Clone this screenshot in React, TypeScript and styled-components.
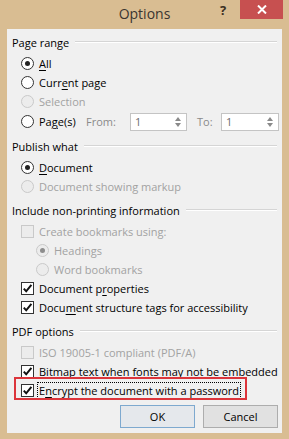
import React from "react";
import styled, { createGlobalStyle, css } from "styled-components";

const GlobalStyle = createGlobalStyle`
  html, body { margin: 0; padding: 0; }
  body {
    width: 289px;
    height: 439px;
    overflow: hidden;
    background: #d8bc90;
    font-family: "Open Sans", "Noto Sans", sans-serif;
  }
`;

const Window = styled.div`
  width: 289px;
  height: 439px;
  background: #d9bd92;
  display: flex;
  flex-direction: column;
  box-sizing: border-box;
`;

const TitleBar = styled.div`
  height: 29px;
  display: grid;
  grid-template-columns: 1fr auto 1fr;
  align-items: start;
  flex-shrink: 0;
`;

const Title = styled.div`
  grid-column: 2;
  font-size: 14px;
  line-height: 27px;
  color: #3a3530;
`;

const Caption = styled.div`
  grid-column: 3;
  display: flex;
  justify-content: flex-end;
  padding-right: 6px;
`;

const HelpButton = styled.div`
  width: 28px;
  height: 20px;
  display: flex;
  align-items: center;
  justify-content: center;
  font-size: 13px;
  font-weight: 700;
  color: #3a2f22;
  margin-right: 3px;
  line-height: 1;
`;

const CloseButton = styled.div`
  width: 43px;
  height: 19px;
  background: #c75050;
  display: flex;
  align-items: center;
  justify-content: center;
`;

const Client = styled.div`
  flex: 1;
  margin: 0 7px 6px 7px;
  background: #f0f0f0;
  padding: 4px 5px 0 5px;
  display: flex;
  flex-direction: column;
  font-size: 11px;
  color: #000;
`;

const Group = styled.div<{ $first?: boolean }>`
  display: flex;
  flex-direction: column;
  margin-top: ${(p) => (p.$first ? 0 : 5)}px;
`;

const GroupHeader = styled.div`
  height: 18px;
  display: flex;
  align-items: center;
  gap: 6px;
  margin-bottom: 3px;
  white-space: nowrap;
`;

const GroupLine = styled.div`
  flex: 1;
  height: 0;
  border-top: 1px solid #d5d5d5;
  border-bottom: 1px solid #ffffff;
`;

const Row = styled.div<{ $indent?: number; $tall?: boolean }>`
  height: ${(p) => (p.$tall ? 21 : 19)}px;
  display: flex;
  align-items: center;
  padding-left: ${(p) => p.$indent ?? 9}px;
  gap: 5px;
  white-space: nowrap;
`;

const Label = styled.span<{ $disabled?: boolean; $focus?: boolean }>`
  color: ${(p) => (p.$disabled ? "#a2a2a2" : "#000")};
  ${(p) =>
    p.$focus &&
    css`
      outline: 1px dotted #000;
      outline-offset: 0;
      padding: 0 1px;
      margin-left: -1px;
      line-height: 15px;
    `}
`;

const U = styled.span`
  text-decoration: underline;
  text-underline-offset: 2px;
`;

const Box = styled.span<{ $disabled?: boolean; $round?: boolean }>`
  width: 13px;
  height: 13px;
  box-sizing: border-box;
  flex-shrink: 0;
  border: 1px solid ${(p) => (p.$disabled ? "#c9c9c9" : "#333333")};
  background: ${(p) => (p.$disabled ? "#ececec" : "#ffffff")};
  border-radius: ${(p) => (p.$round ? "50%" : "0")};
  display: flex;
  align-items: center;
  justify-content: center;
`;

const Dot = styled.span<{ $disabled?: boolean }>`
  width: 5px;
  height: 5px;
  border-radius: 50%;
  background: ${(p) => (p.$disabled ? "#8d8d8d" : "#222")};
`;

const Check = () => (
  <svg width="11" height="11" viewBox="0 0 11 11">
    <path d="M1.8 5.6 L4.2 8.3 L9.4 1.8" fill="none" stroke="#111" strokeWidth="2" />
  </svg>
);

const Radio = ({ checked, disabled }: { checked?: boolean; disabled?: boolean }) => (
  <Box $round $disabled={disabled}>
    {checked && <Dot $disabled={disabled} />}
  </Box>
);

const Checkbox = ({ checked, disabled }: { checked?: boolean; disabled?: boolean }) => (
  <Box $disabled={disabled}>{checked && <Check />}</Box>
);

const Fixed = styled.span<{ $w: number; $disabled?: boolean }>`
  width: ${(p) => p.$w}px;
  flex-shrink: 0;
  color: ${(p) => (p.$disabled ? "#8a8a8a" : "#000")};
`;

const Spin = styled.div<{ $w: number }>`
  width: ${(p) => p.$w}px;
  height: 18px;
  box-sizing: border-box;
  border: 1px solid #c4c4c4;
  background: #fff;
  display: flex;
  align-items: center;
  flex-shrink: 0;
`;

const SpinValue = styled.span`
  flex: 1;
  padding-left: 4px;
  color: #6d6d6d;
`;

const SpinArrows = styled.div`
  width: 12px;
  height: 16px;
  margin-right: 2px;
  display: flex;
  flex-direction: column;
  align-items: center;
  justify-content: center;
  gap: 2px;
`;

const Arrow = ({ down }: { down?: boolean }) => (
  <svg width="6" height="4" viewBox="0 0 6 4">
    <path d={down ? "M0 0 H6 L3 4 Z" : "M0 4 H6 L3 0 Z"} fill="#8a8a8a" />
  </svg>
);

const Spinner = ({ w }: { w: number }) => (
  <Spin $w={w}>
    <SpinValue>1</SpinValue>
    <SpinArrows>
      <Arrow />
      <Arrow down />
    </SpinArrows>
  </Spin>
);

const Highlight = styled.div`
  position: relative;
  display: inline-flex;
  align-self: flex-start;
`;

const RedFrame = styled.div`
  position: absolute;
  left: 2px;
  right: -7px;
  top: -4px;
  bottom: 0;
  border: 2px solid #dc353b;
  pointer-events: none;
`;

const Buttons = styled.div`
  display: flex;
  justify-content: flex-end;
  gap: 8px;
  margin-top: 5px;
  margin-right: -1px;
`;

const Button = styled.div<{ $default?: boolean }>`
  width: 75px;
  height: 23px;
  box-sizing: border-box;
  border: 1px solid ${(p) => (p.$default ? "#7ea9cf" : "#adadad")};
  background: ${(p) => (p.$default ? "#e5e8ec" : "#e1e1e1")};
  display: flex;
  align-items: center;
  justify-content: center;
  color: #000;
`;

export default function App() {
  return (
    <>
      <GlobalStyle />
      <Window>
        <TitleBar>
          <Title>Options</Title>
          <Caption>
            <HelpButton>?</HelpButton>
            <CloseButton>
              <svg width="10" height="9" viewBox="0 0 10 9">
                <path d="M1 0.5 L9 8.5 M9 0.5 L1 8.5" stroke="#fff" strokeWidth="2" />
              </svg>
            </CloseButton>
          </Caption>
        </TitleBar>
        <Client>
          <Group $first>
            <GroupHeader>
              Page range
              <GroupLine />
            </GroupHeader>
            <Row>
              <Radio checked />
              <Label>
                <U>A</U>ll
              </Label>
            </Row>
            <Row>
              <Radio />
              <Label>
                Curr<U>e</U>nt page
              </Label>
            </Row>
            <Row>
              <Radio disabled />
              <Label $disabled>Selection</Label>
            </Row>
            <Row $tall>
              <Radio />
              <Fixed $w={42}>
                Pa<U>g</U>e(s)
              </Fixed>
              <Fixed $w={39} $disabled>
                From:
              </Fixed>
              <Spinner w={57} />
              <Fixed $w={19} $disabled style={{ marginLeft: 5 }}>
                To:
              </Fixed>
              <Spinner w={58} />
            </Row>
          </Group>

          <Group>
            <GroupHeader>
              Publish what
              <GroupLine />
            </GroupHeader>
            <Row>
              <Radio checked />
              <Label>
                <U>D</U>ocument
              </Label>
            </Row>
            <Row>
              <Radio disabled />
              <Label $disabled>Document showing markup</Label>
            </Row>
          </Group>

          <Group>
            <GroupHeader>
              Include non-printing information
              <GroupLine />
            </GroupHeader>
            <Row>
              <Checkbox disabled />
              <Label $disabled>Create bookmarks using:</Label>
            </Row>
            <Row $indent={24}>
              <Radio checked disabled />
              <Label $disabled>Headings</Label>
            </Row>
            <Row $indent={24}>
              <Radio disabled />
              <Label $disabled>Word bookmarks</Label>
            </Row>
            <Row>
              <Checkbox checked />
              <Label>
                Document p<U>r</U>operties
              </Label>
            </Row>
            <Row>
              <Checkbox checked />
              <Label>
                Docu<U>m</U>ent structure tags for accessibility
              </Label>
            </Row>
          </Group>

          <Group>
            <GroupHeader>
              PDF options
              <GroupLine />
            </GroupHeader>
            <Row>
              <Checkbox disabled />
              <Label $disabled>ISO 19005-1 compliant (PDF/A)</Label>
            </Row>
            <Row>
              <Checkbox checked />
              <Label>
                Bitmap te<U>x</U>t when fonts may not be embedded
              </Label>
            </Row>
            <Highlight>
              <Row>
                <Checkbox checked />
                <Label $focus>
                  E<U>n</U>crypt the document with a password
                </Label>
              </Row>
              <RedFrame />
            </Highlight>
          </Group>

          <Buttons>
            <Button $default>OK</Button>
            <Button>Cancel</Button>
          </Buttons>
        </Client>
      </Window>
    </>
  );
}
